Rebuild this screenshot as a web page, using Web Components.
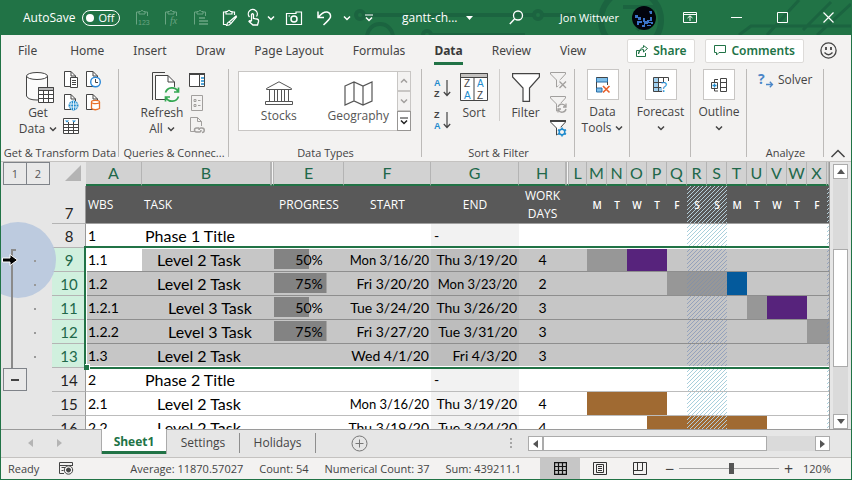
<!DOCTYPE html>
<html lang="en">
<head>
<meta charset="utf-8">
<title>gantt-chart - Excel</title>
<style>
  html, body { margin: 0; }
  body { font: 12px/16px "Open Sans", "Noto Sans", sans-serif; color: #444; }
</style>
</head>
<body>
<app-window>
  <title-bar slot="title"></title-bar>
  <ribbon-tabs slot="tabs"></ribbon-tabs>
  <ribbon-panel slot="ribbon"></ribbon-panel>
  <work-sheet slot="sheet"></work-sheet>
  <sheet-tabs slot="sheettabs"></sheet-tabs>
  <status-bar slot="status"></status-bar>
</app-window>

<script>
const RESET = `
  :host, *, *::before, *::after { box-sizing: border-box; }
  button { font: inherit; color: inherit; background: none; border: 0; padding: 0; margin: 0;
    display: flex; align-items: center; justify-content: center; white-space: nowrap; }
  svg { display: block; overflow: visible; }
`;
function define(name, css, html, init) {
  customElements.define(name, class extends HTMLElement {
    constructor() {
      super();
      this.attachShadow({ mode: 'open' });
    }
    connectedCallback() {
      const body = typeof html === 'function' ? html(this) : html;
      this.shadowRoot.innerHTML = `<style>${RESET}${css}</style>${body}`;
      if (init) init(this);
    }
  });
}

/* ---------- icons: [width, height, markup] ---------- */
const CLIP = '<path d="M4 3H1.5V15.5M10 3H12.5V7M4 5V2.500H5.500Q7 0 8.500 2.500H10V5Z"/>';
const DOC = '<path fill="#fff" d="M1.500 .5H8L12.500 5V15.500H1.500Z"/><path d="M8 .5V5H12.500"/>';
const FUNNEL = '<path d="M.5 .5H15.500V2L10 8V13L6.500 15V8L.5 2Z"/>';
const ICONS = {
  down: [8, 6, '<path stroke-width="1.500" d="M1 1.500L4 4.500L7 1.500"/>'],
  up: [16, 9, '<path stroke-width="1.500" d="M1.500 8L8 1.500L14.500 8"/>'],
  more: [8, 8, '<path d="M0 1H8"/><path stroke-width="1.500" d="M1 3.500L4 6.500L7 3.500"/>'],
  upsm: [8, 6, '<path stroke-width="1.500" d="M1 4.500L4 1.500L7 4.500"/>'],
  clip123: [15, 17, CLIP + '<text x="3" y="16" font-size="7" font-family="Liberation Sans" fill="currentColor" stroke="none">123</text>'],
  clipfx: [15, 17, CLIP + '<text x="6" y="15" font-size="10" font-style="italic" font-family="Liberation Serif" fill="currentColor" stroke="none">fx</text>'],
  clippara: [15, 17, CLIP + '<path stroke-width="1.500" d="M6 9H12M6 12H15M6 15H15"/>'],
  clippen: [15, 17, '<path stroke-width="1.200" d="M4 3H1.500V15.500H4M10 3H12.500V6M4 5V2.500H5.500Q7 0 8.500 2.500H10V5Z"/><path stroke-width="1.200" d="M14 7L7 13L9 14.500L14.500 8ZM7 13Q5.500 13 4.500 16.500Q7.500 16.500 9 14.500"/>'],
  touch: [13, 17, '<path stroke-width="1.300" d="M4.500 12V5.500Q5.500 4 6.500 5.500V9.500L10 10Q12 10.500 11.500 12.500L10.500 16H6L2 12.500Q2.500 11 4.500 12.500M2.500 8A4.500 4.500 0 1 1 9.500 7.500"/>'],
  camera: [16, 14, '<path stroke-width="1.200" d="M.5 2.500H10V1H15.500V13.500H.5Z"/><circle cx="8" cy="8" r="3" stroke-width="1.500"/><path d="M2.500 5H4"/>'],
  undo: [15, 16, '<path stroke-width="1.500" d="M1 1.500V7.500H7M1.500 7Q6 1.500 10 2Q14 3 13.500 7Q13 9 6.500 15"/>'],
  caret: [7, 4, '<path fill="currentColor" stroke="none" d="M0 0H7L3.500 4Z"/>'],
  search: [15, 15, '<circle cx="9" cy="5.500" r="4.500" stroke-width="1.300"/><path stroke-width="1.500" d="M5.500 9L.8 14"/>'],
  display: [14, 11, '<path d="M.5 .5H13.500V10.500H.5ZM.5 2.500H13.500M7 9V4M4.500 6L7 3.800L9.500 6"/>'],
  min: [11, 11, '<path d="M0 5.500H11"/>'],
  max: [11, 11, '<path d="M.5 .5H10.500V10.500H.5Z"/>'],
  close: [11, 11, '<path stroke-width="1.200" d="M.5 .5L10.500 10.500M10.500 .5L.5 10.500"/>'],
  share: [12, 12, '<path d="M3.500 5.500H.5V11.500H9.500V8M2.500 9Q3 4.500 7.500 4.500V7L11.500 3.500L7.500 .5V2.500Q3.500 3 2.500 9Z"/>'],
  comment: [12, 11, '<path d="M.5 .5H11.500V7.500H5L2.500 10V7.500H.5Z"/>'],
  smiley: [17, 17, '<circle cx="8.500" cy="8.500" r="7.600" stroke-width="1.300"/><path stroke-width="1.800" d="M6 5V8M11 5V8"/><path stroke-width="1.300" d="M4.500 10.500Q8.500 15 12.500 10.500"/>'],
  getdata: [28, 31, '<path fill="#fbfbfb" d="M.5 4V24Q2 28 11 28Q20 28 21.500 24V4"/><ellipse fill="#fff" cx="11" cy="4" rx="10.500" ry="3.500"/><path fill="#fff" d="M12.500 15.500H27.500V30.500H12.500Z"/><path fill="#bbb" d="M12.500 15.500H27.500V18.500H12.500Z"/><path d="M12.500 22.500H27.500M12.500 26.500H27.500M17.500 18.500V30.500M22.500 18.500V30.500"/>'],
  doctext: [16, 17, DOC + '<path fill="#fff" d="M7.500 6.500H14.500V16.500H7.500ZM9 9.500H13M9 11.500H13M9 13.500H13"/>'],
  docclock: [16, 17, DOC + '<circle cx="10.500" cy="11" r="4.800" fill="#fff" stroke="#2b88d8" stroke-width="1.400"/><path d="M10.500 8V11.500H13"/>'],
  docweb: [16, 17, DOC + '<circle cx="10.500" cy="11.500" r="4.500" fill="#1e8bcd" stroke="#1e8bcd"/><path stroke="#fff" stroke-width=".8" d="M6 10H15M6 13H15M10.500 7V16M8.500 7.500Q7 11.500 8.500 15.500M12.500 7.500Q14 11.500 12.500 15.500"/>'],
  docdb: [16, 17, DOC + '<path fill="#fff" stroke="#e8702a" stroke-width="1.300" d="M6.500 8V14.500Q10 17 14.500 14.500V8"/><ellipse cx="10.500" cy="8" rx="4" ry="1.600" fill="#fff" stroke="#e8702a" stroke-width="1.300"/>'],
  table: [16, 16, '<path fill="#fff" d="M.5 .5H15.500V15.500H.5Z"/><path d="M.5 6.500H15.500M.5 9.500H15.500M.5 12.500H15.500M5.500 4V15.500M10.500 4V15.500"/><path stroke="none" fill="#1e8bcd" d="M2 2.500H6L4 4.500ZM9 2.500H13L11 4.500Z"/>'],
  refresh: [28, 31, '<path d="M.5 28V.5H13"/><path fill="#fff" d="M3.500 3.500H16L22.500 10V27.500H3.500Z"/><path d="M16 3.500V10H22.500"/><circle cx="20" cy="22.500" r="8" fill="#f7f7f6" stroke="none"/><path stroke="#35a853" stroke-width="1.700" d="M13.500 20.500A6.800 6.800 0 0 1 26 19.500M26.500 15.500V20H22M26.500 24.500A6.800 6.800 0 0 1 14 25.500M13.500 29.500V25H18"/>'],
  pane: [16, 14, '<path fill="#fff" d="M.5 .5H15.500V13.500H.5Z"/><path stroke-width="2" d="M0 1H16"/><path d="M10.500 2V13.500"/><path stroke="#1e8bcd" stroke-width="1.500" d="M12 5H15M12 8H15M12 11H15"/>'],
  props: [12, 16, '<path d="M.5 .5H11.500V15.500H.5ZM3 4.500H5V6.500H3ZM3 9.500H5V11.500H3ZM7 5.500H9.500M7 10.500H9.500"/>'],
  doclink: [15, 17, '<path d="M5 14.500H.5V.5H7.500L11.500 4.500V9M7.500 .5V4.500H11.500"/><path stroke-width="1.500" d="M9 11H6.500A2 2 0 0 0 6.500 15H9.500Q11 15 11 13M9 13Q9 11 11 11H12A2 2 0 0 1 12 15.500"/>'],
  bank: [28, 25, '<path fill="#fff" d="M1.500 7.500L14 .8L26.500 7.500V8.500H1.500Z"/><path d="M4.500 8.500V20.500H23.500V8.500M9.500 9V20M12.500 9V20M16.500 9V20M19.500 9V20"/><path fill="#fff" d="M.5 20.500H27.500V23.500H.5Z"/>'],
  map: [29, 25, '<path fill="#fff" stroke-width="1.200" d="M1 5L10 1L19 5L28 1V20L19 24L10 20L1 24ZM10 1V20M19 5V24"/>'],
  az: [17, 20, '<text x="0" y="8" font-size="9" font-weight="700" font-family="Liberation Sans" fill="#1e8bcd" stroke="none">A</text><text x="0" y="19" font-size="9" font-weight="700" font-family="Liberation Sans" fill="#444" stroke="none">Z</text><path stroke-width="1.200" d="M13 2V17.500M9.800 14L13 17.500L16.200 14"/>'],
  za: [17, 20, '<text x="0" y="8" font-size="9" font-weight="700" font-family="Liberation Sans" fill="#444" stroke="none">Z</text><text x="0" y="19" font-size="9" font-weight="700" font-family="Liberation Sans" fill="#1e8bcd" stroke="none">A</text><path stroke-width="1.200" d="M13 2V17.500M9.800 14L13 17.500L16.200 14"/>'],
  sort: [29, 28, '<path fill="#fff" d="M.5 .5H27.500V27.500H.5Z"/><path fill="#c4c2c0" d="M.5 .5H27.500V4.500H.5Z"/><path d="M14 4V27.500"/><g font-size="10" font-family="Liberation Sans" stroke="none" fill="#444"><text x="4" y="14">Z</text><text x="17" y="26">Z</text><text x="4" y="26" fill="#1e8bcd">A</text><text x="17" y="14" fill="#1e8bcd">A</text></g>'],
  filter: [28, 29, '<path fill="#fff" stroke-width="1.200" d="M.6 .6H27.400V4L17.500 15V28.400H11V15L.6 4Z"/>'],
  fclear: [17, 17, FUNNEL + '<path stroke="#f3f2f1" stroke-width="4" d="M9 9L16 16M16 9L9 16"/><path stroke-width="1.300" d="M9.500 9.500L16 16M16 9.500L9.500 16"/>'],
  fredo: [17, 17, FUNNEL + '<circle cx="12" cy="12" r="5" fill="#f3f2f1" stroke="none"/><path stroke-width="1.300" d="M8 11A4 4 0 0 1 15.500 10.500M16 7.500V11H13M16 13A4 4 0 0 1 8.500 14M8 16.500V13H11"/>'],
  fadv: [17, 17, '<path fill="#fff" d="M.5 .5H15.500V2L10 8V13L6.500 15V8L.5 2Z"/><path stroke-width="2" d="M0 1H16"/><circle cx="12" cy="12" r="5" fill="#f3f2f1" stroke="none"/><circle cx="12" cy="12" r="2.800" stroke="#1e8bcd" stroke-width="1.500"/><path stroke="#1e8bcd" stroke-width="1.600" d="M12 7.500V9.500M12 14.500V16.500M8 9.700L10 10.800M14 13.200L16 14.300M8 14.300L10 13.200M14 10.800L16 9.700"/>'],
  tools: [16, 18, '<path fill="#7fbfea" stroke="#2b6fa8" d="M1.500 1.500H12.500V6H1.500ZM1.500 12H7V16H1.500Z"/><path d="M12.500 6V9M1.500 6V12M1.500 1.500H12.500"/><path stroke="#e8602a" stroke-width="1.600" d="M8 10L14.500 16.500M14.500 10L8 16.500"/>'],
  forecast: [18, 16, '<path fill="#9fd0f0" stroke="none" d="M1 1H6V15H1ZM6 10H10V15H6Z"/><path d="M1.500 .5H16.500V4M1.500 .5V14.500H10M1.500 5.500H11M1.500 10.500H9M6.500 .5V14.500M11.500 .5V5"/><text x="9" y="15" font-size="14" font-family="Open Sans" fill="#1e8bcd" stroke="none">?</text>'],
  outline: [17, 14, '<path d="M9.500 .5H15.500V13.500H9.500ZM9.500 4.500H15.500M9.500 9.500H15.500M.5 4.500H6.500V10.500H.5ZM3.500 4V1.500H7M3.500 11V13H7"/><path stroke="#1e8bcd" stroke-width="1.300" d="M3.500 5.500V9.500M1.500 7.500H5.500"/>'],
  solver: [15, 15, '<text x="-1" y="11" font-size="14" font-weight="700" font-family="Open Sans" fill="#4a86c8" stroke="none">?</text><path stroke="#4a86c8" stroke-width="1.300" d="M7 11.500H13.500M10.800 8.800L13.500 11.500L10.800 14.200"/>'],
  corner: [16, 16, '<path fill="#b4b4b4" stroke="none" d="M16 0V16H0Z"/>'],
  arrow: [16, 14, '<path fill="#000" stroke="#fff" d="M.5 5H8V1.500L15.500 7L8 12.500V9H.5Z"/>'],
  plus: [17, 17, '<circle cx="8.500" cy="8.500" r="7.500"/><path d="M8.500 4.500V12.500M4.500 8.500H12.500"/>'],
  record: [15, 13, '<path d="M5 11.500H.5V.5H13.500V4M.5 3.500H13.500M2.500 5.500H6M2.500 8.500H4.500"/><circle cx="9.500" cy="8" r="4.200" fill="#f3f2f1"/><circle cx="9.500" cy="8" r="2" fill="currentColor"/>'],
  grid: [13, 13, '<path stroke-width="1.200" d="M.6 .6H12.400V12.400H.6ZM4.500 0V13M8.500 0V13M0 4.500H13M0 8.500H13"/>'],
  page: [14, 13, '<path d="M.5 .5H13.500V12.500H.5ZM3.500 2.500H10.500V10.500H3.500ZM5 4.500H9M5 6.500H9M5 8.500H9"/>'],
  breaks: [14, 13, '<path d="M.5 .5H13.500V12.500H.5ZM4.500 .5V8.500M9.500 .5V8.500M0 8.500H9.500"/>'],
  tleft: [5, 8, '<path fill="currentColor" stroke="none" d="M5 0V8L0 4Z"/>'],
  tright: [5, 8, '<path fill="currentColor" stroke="none" d="M0 0V8L5 4Z"/>'],
  tup: [8, 5, '<path fill="currentColor" stroke="none" d="M0 5H8L4 0Z"/>'],
  tdown: [8, 5, '<path fill="currentColor" stroke="none" d="M0 0H8L4 5Z"/>'],
};
define('x-icon', ':host { display: block; flex: none; }', el => {
  const [w, h, body] = ICONS[el.getAttribute('name')];
  return `<svg width="${w}" height="${h}" viewBox="0 0 ${w} ${h}" fill="none" stroke="currentColor" aria-hidden="true">${body}</svg>`;
});

/* ---------- window ---------- */
define('app-window', `
  :host { display: flex; flex-direction: column; height: 100vh; overflow: hidden;
    background: #f3f2f1; border: solid #217346; border-width: 0 1px 1px; }
  slot[name=sheet] { display: flex; flex: 1; min-height: 0; }
`, `<slot name="title"></slot><slot name="tabs"></slot><slot name="ribbon"></slot>
    <slot name="sheet"></slot><slot name="sheettabs"></slot><slot name="status"></slot>`);

/* ---------- title bar ---------- */
define('title-bar', `
  :host { display: flex; align-items: center; flex: none; height: 35px; color: #fff; background: #217346; position: relative; padding-left: 22px; overflow: hidden; }
  .art { position: absolute; inset: 0; }
  .art svg { margin-left: auto; }
  :host > :not(.art, style) { position: relative; }
  .auto { display: flex; align-items: center; gap: 7px; width: 105px; font-size: 12px; }
  .auto input { appearance: none; margin: 0; position: absolute; }
  .switch { display: flex; align-items: center; justify-content: space-between; width: 38px; height: 16px; border: 1px solid #fff; border-radius: 8px; padding: 0 5px 0 3px; font-size: 11px; }
  .switch::before { content: ""; width: 8px; height: 8px; border-radius: 4px; background: #fff; }
  .i { width: 29px; height: 34px; }
  .dim { color: #6aa583; }
  .t { width: 19px; } .c { width: 15px; } .m { width: 32px; }
  .mid { flex: 1; display: flex; align-items: center; justify-content: space-between; padding: 0 11px 0 19px; }
  .file { gap: 8px; }
  .user { gap: 13px; font-size: 11px; }
  .avatar { width: 24px; height: 24px; border-radius: 12px; background: #02040c; overflow: hidden; }
  .w { width: 46px; height: 34px; }
`, `
  <div class="art"><svg width="496" height="35" fill="none" stroke="#1b6440" stroke-width="4">
    <circle cx="5" cy="15" r="4"/><path d="M10 15H178M188 15H220"/><circle cx="183" cy="15" r="4"/>
    <circle cx="25" cy="37" r="13"/><circle cx="72" cy="35" r="4"/><path d="M76 35H170"/>
    <circle cx="276" cy="20" r="30" stroke-width="6" stroke-dasharray="60 12"/><path d="M268 7H300L282 30" />
    <path d="M384 35L396 26H500M412 35L444 0M448 30L476 2M462 35L496 4" stroke-width="3"/></svg></div>
  <label class="auto">AutoSave<input type="checkbox"><span class="switch">Off</span></label>
  <button class="i dim" aria-label="Paste values"><x-icon name="clip123"></x-icon></button>
  <button class="i dim" aria-label="Paste formulas"><x-icon name="clipfx"></x-icon></button>
  <button class="i dim" aria-label="Paste special"><x-icon name="clippara"></x-icon></button>
  <button class="i" aria-label="Paste formatting"><x-icon name="clippen"></x-icon></button>
  <button class="t" aria-label="Touch mode"><x-icon name="touch"></x-icon></button>
  <button class="c" aria-label="Touch options"><x-icon name="down"></x-icon></button>
  <button class="m" aria-label="Camera"><x-icon name="camera"></x-icon></button>
  <button class="i" aria-label="Undo"><x-icon name="undo"></x-icon></button>
  <button class="c" aria-label="Undo history"><x-icon name="down"></x-icon></button>
  <button class="i" aria-label="Customize toolbar"><x-icon name="more"></x-icon></button>
  <div class="mid">
    <button class="file">gantt-ch...<x-icon name="caret"></x-icon></button>
    <button aria-label="Search"><x-icon name="search"></x-icon></button>
    <button class="user">Jon Wittwer<span class="avatar"><svg width="24" height="24" fill="#3b74c8"><path d="M3 9h3v2h3v3H6v-2H3zM5 15h5v2H7v2H5zM11 12h2v3h3v3h-3v3h-3v-2h2v-3h-1zM15 14h3v-3h2v4h-3v2h-2zM17 5h3v3h-2zM15 19h4v-2h-2v-1h4v2h-2v2h-4z"/></svg></span></button>
  </div>
  <button class="w" aria-label="Ribbon display"><x-icon name="display"></x-icon></button>
  <button class="w" aria-label="Minimize"><x-icon name="min"></x-icon></button>
  <button class="w" aria-label="Maximize"><x-icon name="max"></x-icon></button>
  <button class="w" aria-label="Close"><x-icon name="close"></x-icon></button>
`);

/* ---------- ribbon tabs ---------- */
define('ribbon-tabs', `
  :host { display: flex; align-items: center; flex: none; height: 31px; padding: 0 14px 0 17px; font-family: "Noto Sans", sans-serif; }
  nav { display: flex; flex: 1; gap: 29px; }
  nav button { height: 28px; position: relative; }
  nav button:first-child { margin-right: 4px; }
  nav .on { font-weight: 700; color: #3a3a3a; }
  .on::after { content: ""; position: absolute; left: 0; right: 0; bottom: 0; height: 3px; background: #217346; }
  .box { height: 24px; padding: 0 8px; gap: 5px; margin-right: 10px; background: #fff; border: 1px solid #dddbd9; border-radius: 2px; color: #217346; font-weight: 600; }
  .face { margin-left: 6px; }
`, `
  <nav>${['File', 'Home', 'Insert', 'Draw', 'Page Layout', 'Formulas', 'Data', 'Review', 'View']
    .map(t => `<button class="${t === 'Data' ? 'on' : ''}">${t}</button>`).join('')}</nav>
  <button class="box"><x-icon name="share"></x-icon>Share</button>
  <button class="box"><x-icon name="comment"></x-icon>Comments</button>
  <button class="face" aria-label="Feedback"><x-icon name="smiley"></x-icon></button>
`);

/* ---------- ribbon ---------- */
define('ribbon-group', `
  :host { display: flex; flex-direction: column; flex: none; height: 92px; margin-top: 3px;
    background: linear-gradient(#bcbab8, #bcbab8) right top / 1px 88px no-repeat; }
  .body { flex: 1; display: flex; align-items: flex-start; }
  .cap { height: 17px; line-height: 17px; text-align: center; font-size: 11px; white-space: nowrap; }
`, el => `<div class="body"><slot></slot></div><div class="cap">${el.getAttribute('label') || ''}</div>`);

define('big-button', `
  :host { display: block; flex: none; }
  button { flex-direction: column; justify-content: flex-start; width: 100%; }
  .pic { display: flex; align-items: center; justify-content: center; height: 36px; margin-left: var(--shift, 0); }
  .framed { width: 32px; height: 31px; background: #fff; border: 1px solid #c8c6c4; margin-bottom: 4px; }
  .line { display: flex; align-items: center; gap: 4px; height: 16px; }
`, el => {
  const lines = el.getAttribute('label').split('|');
  const arrow = el.hasAttribute('menu');
  return `<button><span class="pic ${el.hasAttribute('framed') ? 'framed' : ''}"><x-icon name="${el.getAttribute('icon')}"></x-icon></span>` +
    lines.map((l, i) => `<span class="line">${l}${arrow && i === lines.length - 1 ? '<x-icon name="down"></x-icon>' : ''}</span>`).join('') + '</button>';
});

define('ribbon-panel', `
  :host { display: flex; flex: none; height: 96px; border-bottom: 1px solid #c4c2c0; }
  .g1 { width: 118px; } .g2 { width: 110px; } .g3 { width: 193px; } .g4 { width: 153px; }
  .g5 { width: 55px; } .g6 { width: 61px; } .g7 { width: 56px; } .g8 { width: 77px; }
  .tall { width: 42px; margin-left: 16px; --shift: 4px; }
  .g2 .tall { width: 50px; margin-left: 18px; --shift: 8px; }
  .small { display: grid; flex: none; grid-template-columns: repeat(var(--n, 1), 22px); grid-auto-rows: 23px; margin: -1px 0 0 1px; }
  .g2 .small { margin-left: -1px; }
  .g4 .small { margin-left: -4px; grid-auto-rows: 24px; }
  .off { color: #a19f9d; }
  .gallery { display: flex; flex: 1; margin: 2px 11px 0 9px; height: 60px; background: #fff; border: 1px solid #c8c6c4; }
  .gallery .item { flex: 1; flex-direction: column; gap: 2px; padding-top: 2px; color: #555; }
  .spin { width: 14px; margin: -1px; display: flex; flex-direction: column; color: #a19f9d; }
  .spin button { flex: 1; border: 1px solid #c8c6c4; background: #f3f2f1; }
  .spin button:last-child { color: #222; border-color: #979593; background: #fff; }
  .orders { display: grid; flex: none; grid-auto-rows: 32px; width: 22px; margin: 3px 0 0 9px; }
  .sort { width: 42px; } .filter { width: 52px; border-left: 1px solid #d0cecc; margin-left: 4px; }
  .frame { width: 100%; }
  .solver { gap: 4px; margin: 3px 0 0 12px; }
  .fold { margin: 0 0 3px auto; align-self: flex-end; width: 28px; }
`, `
  <ribbon-group class="g1" label="Get &amp; Transform Data">
    <big-button class="tall" icon="getdata" label="Get|Data" menu></big-button>
    <div class="small" style="--n:2">
      <button aria-label="From text"><x-icon name="doctext"></x-icon></button><button aria-label="Recent sources"><x-icon name="docclock"></x-icon></button>
      <button aria-label="From web"><x-icon name="docweb"></x-icon></button><button aria-label="Existing connections"><x-icon name="docdb"></x-icon></button>
      <button aria-label="From table"><x-icon name="table"></x-icon></button>
    </div>
  </ribbon-group>
  <ribbon-group class="g2" label="Queries &amp; Connec...">
    <big-button class="tall" icon="refresh" label="Refresh|All" menu></big-button>
    <div class="small">
      <button aria-label="Queries"><x-icon name="pane"></x-icon></button><button class="off" aria-label="Properties"><x-icon name="props"></x-icon></button>
      <button class="off" aria-label="Edit links"><x-icon name="doclink"></x-icon></button>
    </div>
  </ribbon-group>
  <ribbon-group class="g3" label="Data Types">
    <div class="gallery">
      <button class="item"><x-icon name="bank"></x-icon>Stocks</button>
      <button class="item"><x-icon name="map"></x-icon>Geography</button>
      <div class="spin"><button aria-label="Previous"><x-icon name="upsm"></x-icon></button><button aria-label="Next"><x-icon name="down"></x-icon></button><button aria-label="More"><x-icon name="more"></x-icon></button></div>
    </div>
  </ribbon-group>
  <ribbon-group class="g4" label="Sort &amp; Filter">
    <div class="orders"><button aria-label="Sort A to Z"><x-icon name="az"></x-icon></button><button aria-label="Sort Z to A"><x-icon name="za"></x-icon></button></div>
    <big-button class="sort" icon="sort" label="Sort"></big-button>
    <big-button class="filter" icon="filter" label="Filter"></big-button>
    <div class="small">
      <button class="off" aria-label="Clear filter"><x-icon name="fclear"></x-icon></button><button class="off" aria-label="Reapply"><x-icon name="fredo"></x-icon></button>
      <button aria-label="Advanced filter"><x-icon name="fadv"></x-icon></button>
    </div>
  </ribbon-group>
  <ribbon-group class="g5"><big-button class="frame" framed icon="tools" label="Data|Tools" menu></big-button></ribbon-group>
  <ribbon-group class="g6"><big-button class="frame" framed icon="forecast" label="Forecast|" menu></big-button></ribbon-group>
  <ribbon-group class="g7"><big-button class="frame" framed icon="outline" label="Outline|" menu></big-button></ribbon-group>
  <ribbon-group class="g8" label="Analyze"><button class="solver"><x-icon name="solver"></x-icon>Solver</button></ribbon-group>
  <button class="fold" aria-label="Collapse ribbon"><x-icon name="up"></x-icon></button>
`);

/* ---------- worksheet ---------- */
define('outline-gutter', `
  :host { display: flex; flex-direction: column; flex: none; width: 51px; position: relative; color: #555; font-size: 11px; }
  .levels { display: flex; padding-left: 2px; height: 87px; }
  .levels button, .minus { width: 24px; height: 23px; border: 1px solid #7f8389; background: #e9e9e9; }
  .levels button + button { margin-left: -1px; }
  .spot { position: absolute; left: -21px; top: 60px; width: 76px; height: 76px; border-radius: 38px; background: #b8c8de; z-index: 2; opacity: .9; }
  .track { display: flex; height: 119px; position: relative; z-index: 3; }
  .bar { width: 5px; margin-left: 10px; border: solid #8a8a8a; border-width: 2px 0 0 2px; }
  .dots { display: flex; flex-direction: column; margin-left: 18px; }
  .dots i { width: 2px; height: 2px; margin: 11px 0; background: #999; flex: none; }
  .minus { margin-left: 2px; }
  .minus::before { content: ""; width: 8px; height: 2px; background: #444; }
  x-icon { position: absolute; left: 1px; top: 91px; z-index: 4; }
`, `
  <div class="levels"><button>1</button><button>2</button></div>
  <div class="spot"></div>
  <div class="track"><div class="bar"></div><div class="dots"><i></i><i></i><i></i><i></i><i></i></div></div>
  <button class="minus" aria-label="Collapse group"></button>
  <x-icon name="arrow"></x-icon>
`);

const DAYS = 'LMNOPQRSTUVWX'.split('');
const HEAD = ['', 'M', 'T', 'W', 'T', 'F', 'S', 'S', 'M', 'T', 'W', 'T', 'F'];
const ROWS = [
  { n: 8, wbs: '1', task: 'Phase 1 Title', lvl: 1 },
  { n: 9, wbs: '1.1', task: 'Level 2 Task', lvl: 2, pct: 50, start: 'Mon 3/16/20', end: 'Thu 3/19/20', days: 4, done: 'MN', rest: 'OP', color: '#57237c' },
  { n: 10, wbs: '1.2', task: 'Level 2 Task', lvl: 2, pct: 75, start: 'Fri 3/20/20', end: 'Mon 3/23/20', days: 2, done: 'QRS', rest: 'T', color: '#045a9c' },
  { n: 11, wbs: '1.2.1', task: 'Level 3 Task', lvl: 3, pct: 50, start: 'Tue 3/24/20', end: 'Thu 3/26/20', days: 3, done: 'U', rest: 'VW', color: '#57237c' },
  { n: 12, wbs: '1.2.2', task: 'Level 3 Task', lvl: 3, pct: 75, start: 'Fri 3/27/20', end: 'Tue 3/31/20', days: 3, done: 'XY', rest: '' },
  { n: 13, wbs: '1.3', task: 'Level 2 Task', lvl: 2, start: 'Wed 4/1/20', end: 'Fri 4/3/20', days: 3 },
  { n: 14, wbs: '2', task: 'Phase 2 Title', lvl: 1 },
  { n: 15, wbs: '2.1', task: 'Level 2 Task', lvl: 2, start: 'Mon 3/16/20', end: 'Thu 3/19/20', days: 4, rest: 'MNOP', color: '#a06a32' },
  { n: 16, wbs: '2.2', task: 'Level 2 Task', lvl: 2, start: 'Thu 3/19/20', end: 'Tue 3/24/20', days: 4, rest: 'PQRSTU', color: '#a06a32' },
];
function cells(r) {
  const date = t => t ? `<span class="${t.startsWith('Mon') ? 'tight' : ''}">${t}</span>` : '';
  const gantt = [...DAYS, 'Y'].map(d => {
    const fill = (r.done || '').includes(d) ? '#979797' : (r.rest || '').includes(d) ? r.color : '';
    return `<td class="${'RSY'.includes(d) ? 'hatch' : ''} ${fill ? 'fill' : ''}"${fill ? ` style="--fill:${fill}"` : ''}></td>`;
  }).join('');
  return `<tr><th scope="row">${r.n}</th><td class="wbs">${r.wbs}</td><td class="task l${r.lvl}">${r.task}</td><td></td>
    <td class="pct ${r.pct ? 'p' + r.pct : ''}">${r.pct ? r.pct + '%' : ''}</td><td class="date">${date(r.start)}</td>
    <td class="date end">${r.end ? date(r.end) : '<span class="dash">-</span>'}</td><td class="num">${r.days || ''}</td><td></td>${gantt}</tr>`;
}
define('sheet-grid', `
  :host { display: block; flex: 1; min-width: 0; overflow: hidden; }
  table { width: 100%; table-layout: fixed; border-collapse: separate; border-spacing: 0; font-family: Lato, sans-serif; font-size: 14px; line-height: 18px; color: #000; }
  th, td { padding: 0; font-weight: 400; white-space: nowrap; overflow: hidden; }
  .cols th { height: 24px; font-size: 16px; color: #21684a; background: #d2d2d2; border-right: 1px solid #b4b4b4; border-bottom: 2px solid #217346; }
  .cols .corner { background: #e6e6e6; border-color: #e6e6e6; }
  .cols .gap { background: #f4f4f4; border-left: 1px solid #b4b4b4; }
  .corner x-icon { margin: 0 0 0 13px; }
  tbody th { height: 24px; font-size: 15px; text-align: center; color: #222; background: #e6e6e6; border-right: 1px solid #9a9a9a; border-bottom: 1px solid #b4b4b4; padding-left: 1px; }
  tbody td { background-color: #fff; border-bottom: 1px solid #bcbcbc; }
  .head th { height: 38px; vertical-align: bottom; padding-bottom: 1px; }
  .head td { background-color: #595959; border-color: #a0a0a0; color: #fff; font: 12px/18px "Open Sans", sans-serif; text-align: center; white-space: normal; }
  .head .l { text-align: left; padding-left: 2px; }
  .head .d { font-size: 10px; font-weight: 600; }
  .wbs { padding-left: 2px; }
  .task { font-size: 16px; } .l1 { padding-left: 3px; } .l2 { padding-left: 15px; } .l3 { padding-left: 26px; }
  .pct { text-align: center; background-repeat: no-repeat; background-image: linear-gradient(#838383, #838383); background-size: 0 20px; background-position: 0 1px; }
  .p50 { background-size: 50% 20px; } .p75 { background-size: 75% 20px; }
  .date { text-align: right; padding-right: 2px; } .tight { font-size: 13px; }
  .dash { display: block; text-align: left; padding-left: 3px; }
  .end { background-color: #f2f2f2; }
  .num { text-align: center; }
  .sel { position: relative; }
  .sel th { background: #d0f0de; color: #21684a; }
  .sel td { background-color: #c6c6c6; border-color: #8e8e8e; }
  .sel .end { background-color: #bdbdbd; }
  .sel tr:first-child .wbs { background-color: #fff; }
  td.fill { background-color: var(--fill) !important; }
  .hatch { --ink: #a9cfdc; background-image: linear-gradient(135deg, transparent 40%, var(--ink) 40%, var(--ink) 60%, transparent 60%); background-size: 4px 4px; }
  .sel .hatch { --ink: #94a2bc; }
  .head .hatch, .hatch.fill { --ink: #b4cdd8; }
  .sel .hatch.fill { --ink: #8591a5; }
  .sel::after { content: ""; position: absolute; inset: -2px 0 -1px 32px; border: solid #217346; border-width: 2px 0 2px 2px; box-shadow: inset 1px 1px #fff, inset 0 -1px #fff; pointer-events: none; }
  .sel::before { content: ""; position: absolute; left: 32px; bottom: -2px; width: 5px; height: 5px; background: #217346; box-shadow: 1px -1px #fff; z-index: 1; }
`, `
  <table>
    <colgroup><col style="width:34px"><col style="width:56px"><col style="width:129px"><col style="width:3px"><col style="width:70px"><col style="width:87px"><col style="width:88px"><col style="width:47px"><col style="width:3px"><col style="width:18px">${'<col style="width:20px">'.repeat(12)}<col></colgroup>
    <thead><tr class="cols"><th class="corner"><x-icon name="corner"></x-icon></th><th>A</th><th>B</th><th class="gap"></th><th>E</th><th>F</th><th>G</th><th>H</th><th class="gap"></th>${DAYS.map(d => `<th>${d}</th>`).join('')}<th></th></tr></thead>
    <tbody>
      <tr class="head"><th scope="row">7</th><td class="l">WBS</td><td class="l">TASK</td><td></td><td>PROGRESS</td><td>START</td><td>END</td><td>WORK DAYS</td><td></td>${HEAD.map((d, i) => `<td class="d ${i === 6 || i === 7 ? 'hatch' : ''}">${d}</td>`).join('')}<td class="hatch"></td></tr>
      ${cells(ROWS[0])}
    </tbody>
    <tbody class="sel">${ROWS.slice(1, 6).map(cells).join('')}</tbody>
    <tbody>${ROWS.slice(6).map(cells).join('')}</tbody>
  </table>
`);

define('scroll-track', `
  :host { display: flex; flex-direction: var(--dir, row); background: #dadada; }
  button { width: 15px; height: 15px; flex: none; background: #fff; border: 1px solid #ababab; color: #555; }
  .thumb { background: #fff; border: 1px solid #ababab; flex: var(--thumb); }
  .before { flex: var(--before); } .after { flex: var(--after); }
`, el => {
  const v = el.hasAttribute('vertical');
  return `<button aria-label="${v ? 'Scroll up' : 'Scroll left'}"><x-icon name="${v ? 'tup' : 'tleft'}"></x-icon></button><div class="before"></div><div class="thumb"></div><div class="after"></div>
    <button aria-label="${v ? 'Scroll down' : 'Scroll right'}"><x-icon name="${v ? 'tdown' : 'tright'}"></x-icon></button>`;
});

define('work-sheet', `
  :host { display: flex; flex: 1; min-width: 0; background: #e6e6e6; overflow: hidden; }
  .side { display: flex; width: 22px; padding: 2px 3px 0 3px; border-left: 1px solid #9a9a9a; }
  scroll-track { width: 15px; --dir: column; --before: 71; --thumb: 117; --after: 48; }
`, `<outline-gutter></outline-gutter><sheet-grid></sheet-grid><div class="side"><scroll-track vertical></scroll-track></div>`);

/* ---------- sheet tabs ---------- */
define('sheet-tabs', `
  :host { display: flex; align-items: flex-start; height: 28px; flex: none; background: #e6e6e6; border-top: 1px solid #9a9a9a; padding-right: 21px; }
  .nav { display: flex; width: 100px; padding: 9px 0 0 27px; gap: 24px; color: #b4b4b4; }
  .tabs { display: flex; flex: 1; }
  .tabs button { height: 24px; width: 76px; }
  .tabs button.on { width: 66px; background: #fff; color: #217346; font-weight: 700; border: solid #ababab; border-width: 0 1px; margin-top: -1px; height: 25px; box-shadow: inset 0 -3px #217346; }
  .tabs .line { border-right: 1px solid #8e8e8e; height: 20px; margin-top: 3px; padding-bottom: 1px; }
  .tabs .on + .line { width: 73px; }
  .tabs .add { width: 86px; height: 26px; color: #777; }
  .grip { width: 28px; padding: 8px 0 0 10px; display: grid; gap: 2px; grid-auto-rows: 2px; }
  .grip i { width: 2px; background: #a6a6a6; }
  scroll-track { width: 302px; height: 15px; margin-top: 6px; --before: 0; --thumb: 224; --after: 48; }
`, `
  <div class="nav"><button aria-label="Previous sheet"><x-icon name="tleft"></x-icon></button><button aria-label="Next sheet"><x-icon name="tright"></x-icon></button></div>
  <div class="tabs"><button class="on">Sheet1</button><button class="line">Settings</button><button class="line">Holidays</button><button class="add" aria-label="New sheet"><x-icon name="plus"></x-icon></button></div>
  <div class="grip"><i></i><i></i><i></i></div>
  <scroll-track></scroll-track>
`);

/* ---------- status bar ---------- */
define('status-bar', `
  :host { display: flex; align-items: center; height: 22px; flex: none; background: #f3f2f1; border-top: 1px solid #c4c2c0; font-size: 11px; padding: 0 20px 0 7px; }
  .rec { margin: 0 56px 0 20px; }
  .sums { display: flex; flex: 1; gap: 16px; white-space: nowrap; }
  .v { width: 40px; height: 21px; color: #333; }
  .v.on { background: #c6c6c6; color: #111; }
  .z { width: 19px; height: 21px; font-size: 16px; }
  input { appearance: none; width: 100px; height: 21px; margin: 0; background: linear-gradient(#a6a6a6, #a6a6a6) center / 100% 1px no-repeat; }
  input::-webkit-slider-thumb { appearance: none; width: 5px; height: 11px; background: #555; }
  output { width: 33px; text-align: right; }
`, `
  <span>Ready</span><button class="rec" aria-label="Record macro"><x-icon name="record"></x-icon></button>
  <div class="sums"><span>Average: 11870.57027</span><span>Count: 54</span><span>Numerical Count: 37</span><span>Sum: 439211.1</span></div>
  <button class="v on" aria-label="Normal view"><x-icon name="grid"></x-icon></button>
  <button class="v" aria-label="Page layout view"><x-icon name="page"></x-icon></button>
  <button class="v" aria-label="Page break view"><x-icon name="breaks"></x-icon></button>
  <button class="z" aria-label="Zoom out">−</button>
  <input type="range" min="0" max="100" value="53" aria-label="Zoom">
  <button class="z" aria-label="Zoom in">+</button>
  <output>120%</output>
`);
</script>
</body>
</html>
